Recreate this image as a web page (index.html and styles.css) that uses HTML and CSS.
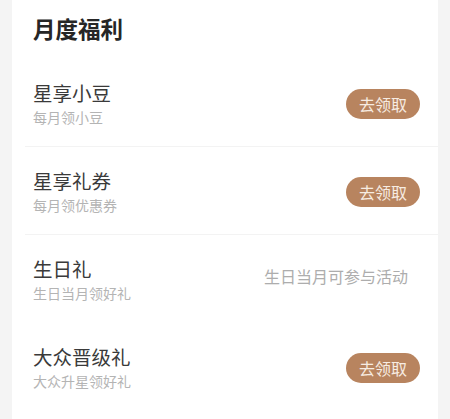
FILE: index.html
```html
<!DOCTYPE html>
<html lang="zh-CN">
<head>
<meta charset="UTF-8">
<meta name="viewport" content="width=device-width, initial-scale=1.0">
<title>月度福利</title>
<link rel="stylesheet" href="styles.css">
</head>
<body>

<div class="card">
    <h2 class="card-title">月度福利</h2>

    <div class="perk">
        <div class="perk-info">
            <div class="perk-name">星享小豆</div>
            <div class="perk-desc">每月领小豆</div>
        </div>
        <a class="perk-btn">去领取</a>
    </div>

    <div class="perk">
        <div class="perk-info">
            <div class="perk-name">星享礼券</div>
            <div class="perk-desc">每月领优惠券</div>
        </div>
        <a class="perk-btn">去领取</a>
    </div>

    <div class="perk no-line">
        <div class="perk-info">
            <div class="perk-name">生日礼</div>
            <div class="perk-desc">生日当月领好礼</div>
        </div>
        <span class="perk-note">生日当月可参与活动</span>
    </div>

    <div class="perk">
        <div class="perk-info">
            <div class="perk-name">大众晋级礼</div>
            <div class="perk-desc">大众升星领好礼</div>
        </div>
        <a class="perk-btn">去领取</a>
    </div>
</div>

</body>
</html>
```

FILE: styles.css
```css
body {
    margin: 0;
    background-color: #f4f4f4;
    font-family: "Noto Sans CJK SC", "Noto Sans", sans-serif;
    color: #333;
}
.card {
    margin: 0 12px;
    background-color: #fff;
    height: 419px;
    box-sizing: border-box;
    padding-left: 21px;
}
.card-title {
    margin: 0;
    height: 59px;
    line-height: 57px;
    font-size: 22.5px;
    font-weight: 700;
    color: #262626;
}
.perk {
    height: 88px;
    display: flex;
    align-items: center;
    justify-content: space-between;
    padding-right: 18px;
    border-bottom: 1px solid #f3f3f3;
    box-sizing: border-box;
    margin-left: -8px;
    padding-left: 8px;
}
.perk:last-child, .perk.no-line {
    border-bottom: none;
}
.perk-name {
    font-size: 19.5px;
    font-weight: 400;
    line-height: 26px;
    color: #3a3a3a;
}
.perk-desc {
    margin-top: 2px;
    font-size: 14px;
    line-height: 18px;
    color: #b4b4b4;
}
.perk-btn {
    display: block;
    width: 74px;
    height: 30px;
    line-height: 30px;
    border-radius: 15px;
    text-align: center;
    font-size: 16px;
    background-color: #b8845f;
    color: #f7ece2;
    margin-top: 2px;
}
.perk-note {
    font-size: 16px;
    color: #adadad;
    margin-right: 12px;
    margin-bottom: 6px;
}
```
